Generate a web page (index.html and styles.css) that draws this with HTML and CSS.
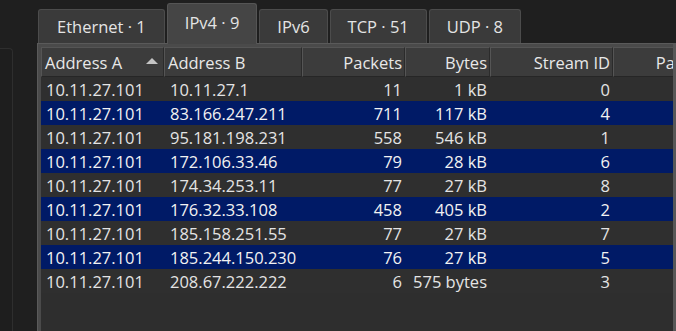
FILE: index.html
```html
<!DOCTYPE html>
<html>

<head>
    <title>Conversations</title>
    <link rel="stylesheet" href="styles.css">
</head>

<body>
    <div class="window">
        <div class="side"></div>
        <div class="main">
            <div class="tabs">
                <div class="tab">Ethernet · 1</div>
                <div class="tab active">IPv4 · 9</div>
                <div class="tab">IPv6</div>
                <div class="tab">TCP · 51</div>
                <div class="tab">UDP · 8</div>
            </div>
            <div class="frame">
                <div class="view">
                    <table class="conv">
                        <colgroup>
                            <col class="c-addr-a">
                            <col class="c-addr-b">
                            <col class="c-packets">
                            <col class="c-bytes">
                            <col class="c-stream">
                            <col class="c-more">
                        </colgroup>
                        <thead>
                            <tr>
                                <th class="left"><span class="head-sort">Address A<span class="sort-up"></span></span></th>
                                <th class="left">Address B</th>
                                <th>Packets</th>
                                <th>Bytes</th>
                                <th>Stream ID</th>
                                <th>Packets A → B</th>
                            </tr>
                        </thead>
                        <tbody>
                            <tr>
                                <td class="left">10.11.27.101</td>
                                <td class="left">10.11.27.1</td>
                                <td>11</td>
                                <td>1 kB</td>
                                <td>0</td>
                                <td></td>
                            </tr>
                            <tr class="sel">
                                <td class="left">10.11.27.101</td>
                                <td class="left">83.166.247.211</td>
                                <td>711</td>
                                <td>117 kB</td>
                                <td>4</td>
                                <td></td>
                            </tr>
                            <tr>
                                <td class="left">10.11.27.101</td>
                                <td class="left">95.181.198.231</td>
                                <td>558</td>
                                <td>546 kB</td>
                                <td>1</td>
                                <td></td>
                            </tr>
                            <tr class="sel">
                                <td class="left">10.11.27.101</td>
                                <td class="left">172.106.33.46</td>
                                <td>79</td>
                                <td>28 kB</td>
                                <td>6</td>
                                <td></td>
                            </tr>
                            <tr>
                                <td class="left">10.11.27.101</td>
                                <td class="left">174.34.253.11</td>
                                <td>77</td>
                                <td>27 kB</td>
                                <td>8</td>
                                <td></td>
                            </tr>
                            <tr class="sel">
                                <td class="left">10.11.27.101</td>
                                <td class="left">176.32.33.108</td>
                                <td>458</td>
                                <td>405 kB</td>
                                <td>2</td>
                                <td></td>
                            </tr>
                            <tr>
                                <td class="left">10.11.27.101</td>
                                <td class="left">185.158.251.55</td>
                                <td>77</td>
                                <td>27 kB</td>
                                <td>7</td>
                                <td></td>
                            </tr>
                            <tr class="sel">
                                <td class="left">10.11.27.101</td>
                                <td class="left">185.244.150.230</td>
                                <td>76</td>
                                <td>27 kB</td>
                                <td>5</td>
                                <td></td>
                            </tr>
                            <tr>
                                <td class="left">10.11.27.101</td>
                                <td class="left">208.67.222.222</td>
                                <td>6</td>
                                <td>575 bytes</td>
                                <td>3</td>
                                <td></td>
                            </tr>
                        </tbody>
                    </table>
                </div>
            </div>
        </div>
    </div>
</body>

</html>
```

FILE: styles.css
```css
body {
    margin: 0;
    background: #1f1f1f;
    font-family: "Open Sans", "Liberation Sans", sans-serif;
    font-size: 16.5px;
    color: #e6e6e6;
    height: 331px;
    overflow: hidden;
}

.window {
    display: flex;
    height: 331px;
}

.side {
    width: 12px;
    margin-top: 48px;
    background: #1e1e1e;
    border-top: 1px solid #2e2e2e;
    border-right: 1px solid #2e2e2e;
    border-top-right-radius: 4px;
}

.main {
    flex: 1;
    margin-left: 24px;
    display: flex;
    flex-direction: column;
    min-width: 0;
}

/* tab strip */
.tabs {
    display: flex;
    align-items: flex-end;
    gap: 2px;
    height: 43px;
    padding-left: 1px;
}

.tab {
    height: 33px;
    padding: 0 17px;
    display: flex;
    align-items: center;
    justify-content: center;
    background: #3a3a3a;
    border: 1px solid #4c4c4c;
    border-bottom: none;
    border-radius: 3px 3px 0 0;
    color: #e4e4e4;
    white-space: nowrap;
}

.tab:first-child {
    padding: 0 18px;
}

.tab.active {
    height: 37px;
    margin-bottom: -1px;
    padding: 0 17px 3px;
    background: #454545;
    border-color: #555;
    position: relative;
    z-index: 1;
}

/* table frame */
.frame {
    flex: 1;
    background: #4a4a4a;
    border-top: 1px solid #5a5a5a;
    border-left: 1px solid #5a5a5a;
    border-right: 3px solid #575757;
    padding: 3px 0 0 3px;
    min-height: 0;
    display: flex;
}

.view {
    flex: 1;
    background: #2e2e2e;
    overflow: hidden;
}

.conv {
    table-layout: fixed;
    width: 727px;
    border-collapse: separate;
    border-spacing: 0;
}

.c-addr-a { width: 123px; }
.c-addr-b { width: 138px; }
.c-packets { width: 103px; }
.c-bytes { width: 85px; }
.c-stream { width: 123px; }
.c-more { width: 155px; }

.conv th {
    height: 28px;
    padding: 0 2px 0 3px;
    background: #3c3c3c;
    border-top: 1px solid #555;
    border-left: 1px solid #555;
    border-right: 1px solid #2b2b2b;
    border-bottom: 1px solid #262626;
    font-weight: normal;
    text-align: right;
    white-space: nowrap;
    overflow: hidden;
    color: #e8e8e8;
}

.conv th.left {
    text-align: left;
}

.head-sort {
    display: flex;
    align-items: center;
    justify-content: space-between;
    padding-right: 3px;
}

.sort-up {
    width: 0;
    height: 0;
    border-left: 6px solid transparent;
    border-right: 6px solid transparent;
    border-bottom: 6px solid #c4c4c4;
    margin-top: -3px;
}

.conv td {
    height: 24px;
    padding: 0 3px 0 5px;
    text-align: right;
    white-space: nowrap;
    overflow: hidden;
    background: #2f2f2f;
    color: #e4e4e4;
}

.conv td.left {
    text-align: left;
}

.conv td:nth-child(2) {
    padding-left: 6px;
}

.conv tr.sel td {
    background: #001a66;
    color: #f2f2f2;
}
```
